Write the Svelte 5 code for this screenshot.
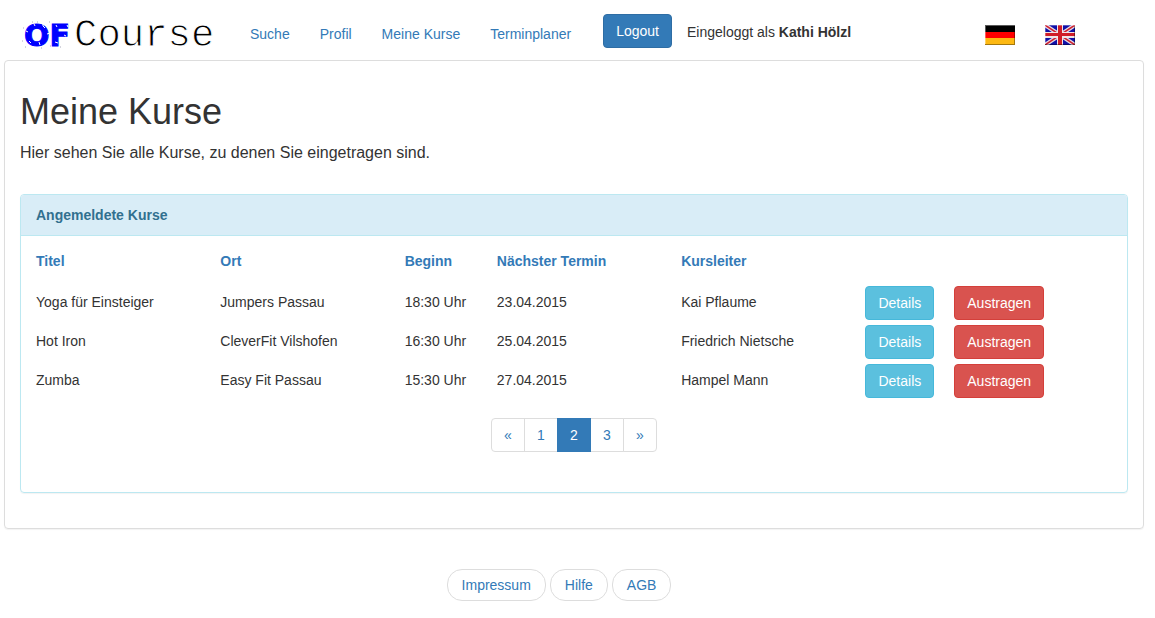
<script>
  const navLinks = ['Suche', 'Profil', 'Meine Kurse', 'Terminplaner'];
  const columns = ['Titel', 'Ort', 'Beginn', 'Nächster Termin', 'Kursleiter'];
  const courses = [
    { title: 'Yoga für Einsteiger', place: 'Jumpers Passau', start: '18:30 Uhr', next: '23.04.2015', leader: 'Kai Pflaume' },
    { title: 'Hot Iron', place: 'CleverFit Vilshofen', start: '16:30 Uhr', next: '25.04.2015', leader: 'Friedrich Nietsche' },
    { title: 'Zumba', place: 'Easy Fit Passau', start: '15:30 Uhr', next: '27.04.2015', leader: 'Hampel Mann' }
  ];
  const pages = ['«', '1', '2', '3', '»'];
  const footerLinks = ['Impressum', 'Hilfe', 'AGB'];
  let current = $state('2');
</script>

<header>
  <a class="logo" href="#start" aria-label="OFCourse">
    <svg width="200" height="54" viewBox="0 0 200 54">
      <text class="of" x="4" y="42">OF</text>
      <text class="course" x="54" y="42">Course</text>
      <path class="scratches" d="M6 27l2 1M9 37l2 2M14 20l1 2M19 38l1 3M23 20v2l2 2M27 30l3-1M36 21l1 2M35 38l3 1M44 31l2 1M47 21l1 2" />
      <path class="specks" d="M3 24h1M5 43h1M12 18h1M21 44h1M30 42h1M29 18h1M40 43h1M2 37h1M17 18h1" />
    </svg>
  </a>
  <nav>
    {#each navLinks as link}
      <a href="#{link}">{link}</a>
    {/each}
  </nav>
  <button class="btn primary" type="button">Logout</button>
  <span class="user">Eingeloggt als <b>Kathi Hölzl</b></span>
  <div class="languages">
    <a href="#de" aria-label="Deutsch">
      <svg width="30" height="20" viewBox="0 0 30 20">
        <path fill="#000" d="M0 0h30v7H0z" />
        <path fill="#f00" d="M0 7h30v6H0z" />
        <path fill="#fdb913" d="M0 13h30v7H0z" />
        <path fill="#fff" opacity=".35" d="M0 0h30v1H0zM0 1h1v18H0z" />
        <path fill="#000" opacity=".35" d="M0 19h30v1H0zM29 1h1v18h-1z" />
      </svg>
    </a>
    <a href="#en" aria-label="English">
      <svg width="30" height="20" viewBox="0 0 30 20">
        <path fill="#1010a8" d="M0 0h30v20H0z" />
        <path stroke="#e4dce8" stroke-width="4" d="M0 0l30 20M30 0L0 20" />
        <path stroke="#d02030" stroke-width="1.5" d="M0 0l30 20M30 0L0 20" />
        <path fill="#f0e4e8" d="M12 0h6v20h-6zM0 7h30v6H0z" />
        <path fill="#d01c28" d="M13 0h4v20h-4zM0 8h30v3H0z" />
        <path fill="#fff" opacity=".3" d="M0 0h30v1H0zM0 1h1v18H0z" />
        <path fill="#000" opacity=".35" d="M0 19h30v1H0zM29 1h1v18h-1z" />
      </svg>
    </a>
  </div>
</header>

<main>
  <h1>Meine Kurse</h1>
  <p>Hier sehen Sie alle Kurse, zu denen Sie eingetragen sind.</p>

  <section>
    <h2>Angemeldete Kurse</h2>
    <table>
      <colgroup>
        <col class="wide" /><col class="wide" /><col class="narrow" /><col class="wide" /><col class="wide" /><col />
      </colgroup>
      <thead>
        <tr>
          {#each columns as column}
            <th scope="col"><a href="#sort">{column}</a></th>
          {/each}
          <td></td>
        </tr>
      </thead>
      <tbody>
        {#each courses as course}
          <tr>
            <td>{course.title}</td>
            <td>{course.place}</td>
            <td>{course.start}</td>
            <td>{course.next}</td>
            <td>{course.leader}</td>
            <td class="actions-cell">
              <div class="actions">
                <button class="btn info" type="button">Details</button>
                <button class="btn danger" type="button">Austragen</button>
              </div>
            </td>
          </tr>
        {/each}
      </tbody>
    </table>
    <div class="pagination">
      {#each pages as page}
        <button type="button" class:active={page === current} onclick={() => { if (page >= '1' && page <= '3') current = page; }}>{page}</button>
      {/each}
    </div>
  </section>
</main>

<footer>
  {#each footerLinks as link}
    <a href="#{link}">{link}</a>
  {/each}
</footer>

<style>
  :global(body) {
    background: #fff;
    color: #333;
    font: 14px/20px "Liberation Sans", Arial, sans-serif;
  }
  a {
    color: #337ab7;
    text-decoration: none;
  }
  button {
    font: inherit;
    cursor: pointer;
  }
  svg {
    display: block;
  }
  header {
    display: flex;
    align-items: flex-start;
    box-sizing: border-box;
    height: 60px;
    padding: 4px 80px 0 20px;
  }
  .of {
    font: bold 30px "DejaVu Sans", sans-serif;
    fill: #00f;
    stroke: #00f;
    stroke-width: 1;
  }
  .course {
    font: 39px "Courier New", "Liberation Mono", monospace;
    fill: #000;
    stroke: #fff;
    stroke-width: 1;
  }
  .scratches {
    fill: none;
    stroke: #fff;
    stroke-width: 1;
  }
  .specks {
    stroke: #aab;
  }
  nav {
    display: flex;
    gap: 30px;
    margin: 20px 32px 0 30px;
  }
  .btn {
    height: 34px;
    padding: 6px 12px;
    border: 1px solid;
    border-radius: 4px;
    color: #fff;
    line-height: 20px;
  }
  .primary {
    margin-top: 10px;
    background: #337ab7;
    border-color: #2e6da4;
  }
  .info {
    background: #5bc0de;
    border-color: #46b8da;
  }
  .danger {
    background: #d9534f;
    border-color: #d43f3a;
  }
  .user {
    margin: 18px 0 0 15px;
  }
  .languages {
    display: flex;
    gap: 30px;
    margin: 21px 0 0 auto;
  }
  main {
    margin: 0 11px 0 4px;
    padding: 31px 15px 35px;
    border: 1px solid #ddd;
    border-radius: 4px;
    box-shadow: 0 1px 1px rgba(0, 0, 0, 0.05);
  }
  h1 {
    margin: 0 0 10px;
    font-size: 36px;
    font-weight: 500;
    line-height: 40px;
  }
  p {
    margin: 0 0 30px;
    font-size: 16px;
    line-height: 22px;
  }
  section {
    border: 1px solid #bce8f1;
    border-radius: 4px;
    box-shadow: 0 1px 1px rgba(0, 0, 0, 0.05);
    padding-bottom: 40px;
  }
  h2 {
    margin: 0;
    padding: 10px 15px;
    border-bottom: 1px solid #bce8f1;
    border-radius: 3px 3px 0 0;
    background: #d9edf7;
    color: #31708f;
    font-size: 14px;
    line-height: 20px;
  }
  table {
    width: 100%;
    border-collapse: collapse;
    table-layout: fixed;
  }
  .wide {
    width: 16.6667%;
  }
  .narrow {
    width: 8.3333%;
  }
  th,
  td {
    padding: 6px 0 0 15px;
    text-align: left;
    vertical-align: top;
    white-space: nowrap;
  }
  th {
    height: 50px;
    padding-top: 0;
    vertical-align: middle;
  }
  .actions-cell {
    padding: 0 0 5px 15px;
  }
  .actions {
    display: flex;
    gap: 20px;
  }
  .pagination {
    display: flex;
    justify-content: center;
    margin-top: 15px;
  }
  .pagination button {
    height: 34px;
    min-width: 34px;
    padding: 6px 12px;
    margin-left: -1px;
    border: 1px solid #ddd;
    background: #fff;
    color: #337ab7;
  }
  .pagination button:first-child {
    margin-left: 0;
    border-radius: 4px 0 0 4px;
  }
  .pagination button:last-child {
    border-radius: 0 4px 4px 0;
  }
  .pagination .active {
    z-index: 1;
    border-color: #337ab7;
    background: #337ab7;
    color: #fff;
  }
  footer {
    display: flex;
    justify-content: center;
    gap: 4px;
    padding: 40px 41px 16px 4px;
  }
  footer a {
    padding: 5px 14px;
    border: 1px solid #ddd;
    border-radius: 15px;
  }
</style>
